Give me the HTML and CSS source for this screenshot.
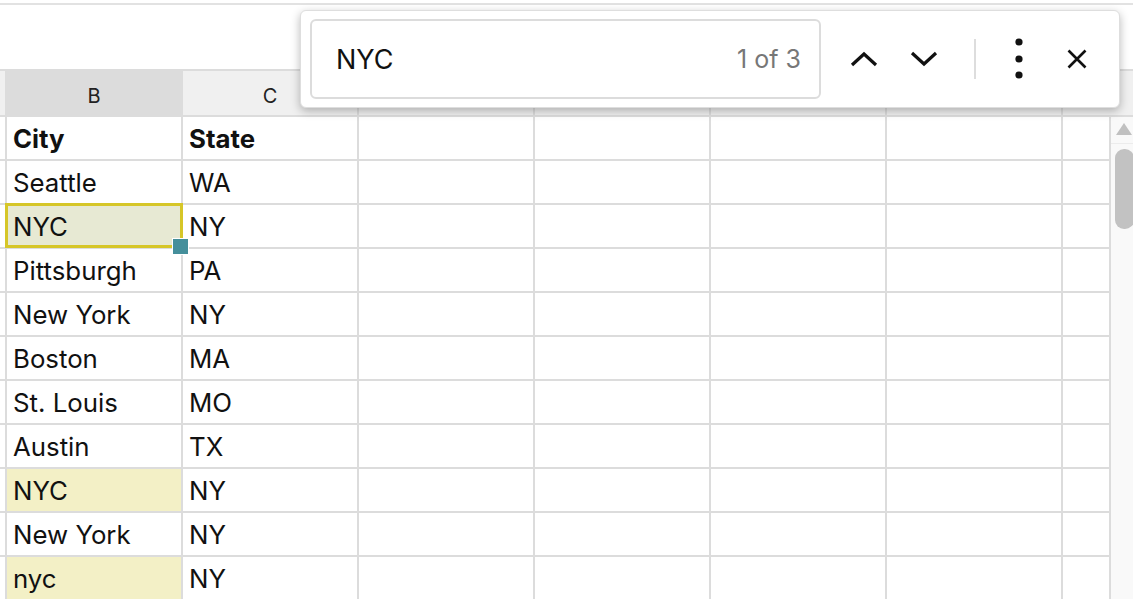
FILE: index.html
```html
<!DOCTYPE html>
<html>
<head>
<meta charset="utf-8">
<link rel="stylesheet" href="styles.css">
</head>
<body>
<div class="app">
  <div class="toolbar"></div>
  <div class="colheads">
    <div class="ch"></div>
    <div class="ch sel">B</div>
    <div class="ch">C</div>
    <div class="ch">D</div>
    <div class="ch">E</div>
    <div class="ch">F</div>
    <div class="ch">G</div>
    <div class="ch"></div>
  </div>
  <div class="body">
    <div class="grid">
      <div class="c rh"></div><div class="c b">City</div><div class="c b">State</div><div class="c"></div><div class="c"></div><div class="c"></div><div class="c"></div><div class="c"></div>
      <div class="c rh"></div><div class="c">Seattle</div><div class="c">WA</div><div class="c"></div><div class="c"></div><div class="c"></div><div class="c"></div><div class="c"></div>
      <div class="c rh"></div><div class="c active">NYC</div><div class="c">NY</div><div class="c"></div><div class="c"></div><div class="c"></div><div class="c"></div><div class="c"></div>
      <div class="c rh"></div><div class="c">Pittsburgh</div><div class="c">PA</div><div class="c"></div><div class="c"></div><div class="c"></div><div class="c"></div><div class="c"></div>
      <div class="c rh"></div><div class="c">New York</div><div class="c">NY</div><div class="c"></div><div class="c"></div><div class="c"></div><div class="c"></div><div class="c"></div>
      <div class="c rh"></div><div class="c">Boston</div><div class="c">MA</div><div class="c"></div><div class="c"></div><div class="c"></div><div class="c"></div><div class="c"></div>
      <div class="c rh"></div><div class="c">St. Louis</div><div class="c">MO</div><div class="c"></div><div class="c"></div><div class="c"></div><div class="c"></div><div class="c"></div>
      <div class="c rh"></div><div class="c">Austin</div><div class="c">TX</div><div class="c"></div><div class="c"></div><div class="c"></div><div class="c"></div><div class="c"></div>
      <div class="c rh"></div><div class="c hl">NYC</div><div class="c">NY</div><div class="c"></div><div class="c"></div><div class="c"></div><div class="c"></div><div class="c"></div>
      <div class="c rh"></div><div class="c">New York</div><div class="c">NY</div><div class="c"></div><div class="c"></div><div class="c"></div><div class="c"></div><div class="c"></div>
      <div class="c rh"></div><div class="c hl">nyc</div><div class="c">NY</div><div class="c"></div><div class="c"></div><div class="c"></div><div class="c"></div><div class="c"></div>
    </div>
    <div class="scrollbar">
      <div class="sb-up"><span class="tri"></span></div>
      <div class="thumb"></div>
    </div>
  </div>

  <div class="findbar">
    <div class="findinput">
      <span class="query">NYC</span>
      <span class="count">1 of 3</span>
    </div>
    <button class="ib nav">
      <svg width="28" height="16" viewBox="0 0 28 16"><path d="M2 14 L14 3 L26 14" fill="none" stroke="#111" stroke-width="3.2"/></svg>
    </button>
    <button class="ib nav">
      <svg width="28" height="16" viewBox="0 0 28 16"><path d="M2 2 L14 13 L26 2" fill="none" stroke="#111" stroke-width="3.2"/></svg>
    </button>
    <span class="divider"></span>
    <button class="ib more">
      <svg width="10" height="42" viewBox="0 0 10 42"><circle cx="5" cy="4" r="3.6" fill="#111"/><circle cx="5" cy="21" r="3.6" fill="#111"/><circle cx="5" cy="37" r="3.6" fill="#111"/></svg>
    </button>
    <button class="ib close">
      <svg width="20" height="20" viewBox="0 0 20 20"><path d="M1.5 1.5 L18.5 18.5 M18.5 1.5 L1.5 18.5" fill="none" stroke="#111" stroke-width="2.6"/></svg>
    </button>
  </div>
</div>
</body>
</html>
```

FILE: styles.css
```css
* { box-sizing: border-box; }
html, body { margin: 0; padding: 0; }
body {
  font-family: Inter, "Noto Sans", "Liberation Sans", sans-serif;
  color: #111;
  background: #fff;
  width: 1133px;
  height: 599px;
  overflow: hidden;
}
.app { position: relative; width: 1133px; height: 599px; overflow: hidden; }

.toolbar {
  height: 69px;
  border-top: 3px solid #fff;
  background: #fff;
}
.toolbar::before {
  content: "";
  display: block;
  height: 2px;
  background: #e2e2e2;
}

.colheads {
  display: grid;
  grid-template-columns: 5px repeat(6, 174px) 1fr;
  gap: 2px;
  padding: 2px 0;
  background: #dcdcdc;
}
.ch {
  height: 44px;
  background: #f0f0f0;
  display: flex;
  align-items: center;
  justify-content: center;
  padding-top: 6px;
  font-size: 20px;
  color: #222;
}
.ch.sel { background: #dcdcdc; }

.body { display: flex; }
.grid {
  display: grid;
  grid-template-columns: 5px repeat(6, 174px) 46px;
  grid-auto-rows: 42px;
  gap: 2px;
  padding-right: 2px;
  background: #dcdcdc;
}
.c {
  background: #fff;
  font-size: 25.8px;
  display: flex;
  align-items: center;
  padding-left: 6px;
  white-space: nowrap;
}
.c.rh { padding: 0; }
.c.b { font-weight: 700; }
.c.hl { background: #f3f0c6; }
.c.active {
  background: #e7e9d3;
  position: relative;
}
.c.active::after {
  content: "";
  position: absolute;
  left: -2px; top: -2px; right: -2px; bottom: -1px;
  border: 3px solid #d6c628;
}
.c.active::before {
  content: "";
  position: absolute;
  right: -8px;
  bottom: -8px;
  width: 15px;
  height: 15px;
  background: #458f9b;
  border: 1px solid #fff;
  z-index: 2;
}

.scrollbar {
  width: 22px;
  background: #f9f9f9;
  display: flex;
  flex-direction: column;
}
.sb-up {
  height: 27px;
  border-bottom: 1px solid #ececec;
  display: flex;
  justify-content: center;
  align-items: flex-end;
  padding-bottom: 8px;
  padding-left: 3px;
}
.tri {
  width: 0; height: 0;
  border-left: 8px solid transparent;
  border-right: 8px solid transparent;
  border-bottom: 12px solid #c0c0c0;
}
.thumb {
  margin-top: 5px;
  margin-left: 4px;
  width: 19px;
  height: 80px;
  border-radius: 9px;
  background: #c2c2c2;
}

.findbar {
  position: absolute;
  left: 300px;
  top: 10px;
  width: 820px;
  height: 98px;
  background: #fff;
  border: 1px solid #dedede;
  border-radius: 6px;
  box-shadow: 0 3px 10px rgba(0,0,0,0.28);
  display: flex;
  align-items: center;
  padding: 0 0 0 9px;
  z-index: 10;
}
.findinput {
  width: 511px;
  height: 80px;
  border: 2px solid #dcdcdc;
  border-radius: 6px;
  display: flex;
  align-items: center;
  justify-content: space-between;
  padding: 0 18px 0 24px;
  flex-shrink: 0;
}
.query { font-size: 27px; color: #111; }
.count { font-size: 25px; color: #777; }
.ib {
  border: 0;
  background: transparent;
  padding: 0;
  height: 60px;
  display: flex;
  align-items: center;
  justify-content: center;
  flex-shrink: 0;
}
.nav { width: 60px; }
.nav:first-of-type { margin-left: 13px; }
.divider {
  width: 2px;
  height: 40px;
  background: #dddddd;
  margin-left: 20px;
  flex-shrink: 0;
}
.more { width: 58px; margin-left: 14px; }
.close { width: 58px; }
```
